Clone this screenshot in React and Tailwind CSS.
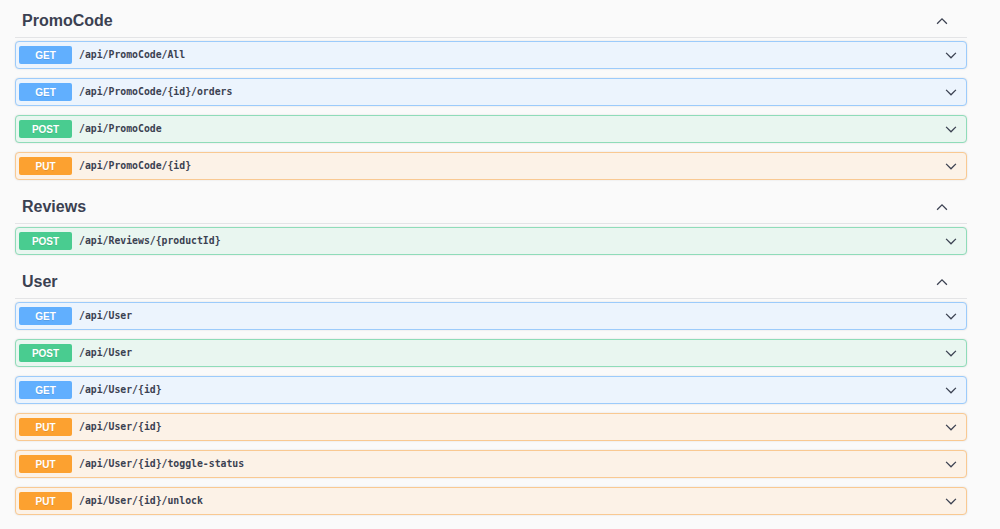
import React from "react";

const STYLES = {
  GET: { block: "bg-[#ecf4fd] border-[#9ccbfb]", badge: "bg-[#61affe]" },
  POST: { block: "bg-[#e9f6f0] border-[#8fdcb9]", badge: "bg-[#49cc90]" },
  PUT: { block: "bg-[#fcf2e7] border-[#f9c992]", badge: "bg-[#fca130]" },
};

const sections = [
  {
    name: "PromoCode",
    ops: [
      ["GET", "/api/PromoCode/All"],
      ["GET", "/api/PromoCode/{id}/orders"],
      ["POST", "/api/PromoCode"],
      ["PUT", "/api/PromoCode/{id}"],
    ],
  },
  { name: "Reviews", ops: [["POST", "/api/Reviews/{productId}"]] },
  {
    name: "User",
    ops: [
      ["GET", "/api/User"],
      ["POST", "/api/User"],
      ["GET", "/api/User/{id}"],
      ["PUT", "/api/User/{id}"],
      ["PUT", "/api/User/{id}/toggle-status"],
      ["PUT", "/api/User/{id}/unlock"],
    ],
  },
];

function Chevron({ up }) {
  return (
    <svg width="14" height="14" viewBox="0 0 20 20" className="shrink-0">
      <path
        d={up ? "M3 14 L10 7 L17 14" : "M3 7 L10 14 L17 7"}
        fill="none"
        stroke="#3b4151"
        strokeWidth="1.8"
      />
    </svg>
  );
}

function Op({ method, path }) {
  const s = STYLES[method];
  return (
    <div
      className={`h-[28px] mb-[9px] flex items-center rounded-[4px] border pl-[3px] pr-[8px] shadow-[0_0_2px_rgba(0,0,0,0.12)] ${s.block}`}
    >
      <div
        className={`w-[53px] h-[18px] rounded-[2px] flex items-center justify-center text-white font-bold text-[10px] [text-shadow:0_1px_0_rgba(0,0,0,0.1)] ${s.badge}`}
        style={{ fontFamily: '"Liberation Sans", Arial, sans-serif' }}
      >
        {method}
      </div>
      <div
        className="ml-[7px] flex-1 text-[#3b4151] font-bold text-[9.8px]"
        style={{ fontFamily: '"DejaVu Sans Mono", "Liberation Mono", monospace' }}
      >
        {path}
      </div>
      <Chevron />
    </div>
  );
}

export default function App() {
  return (
    <div
      className="w-[1000px] h-[529px] overflow-hidden bg-[#fafafa] pt-[3px] pl-[15px] pr-[33px]"
      style={{ fontFamily: '"Liberation Sans", Arial, sans-serif' }}
    >
      {sections.map((sec) => (
        <div key={sec.name}>
          <div className="h-[35px] mb-[3px] flex items-center justify-between border-b border-[#e3e4e6] pl-[7px] pr-[18px] pt-[2px]">
            <span className="text-[16px] font-bold text-[#3b4151]">{sec.name}</span>
            <Chevron up />
          </div>
          {sec.ops.map(([m, p]) => (
            <Op key={m + p} method={m} path={p} />
          ))}
        </div>
      ))}
    </div>
  );
}
